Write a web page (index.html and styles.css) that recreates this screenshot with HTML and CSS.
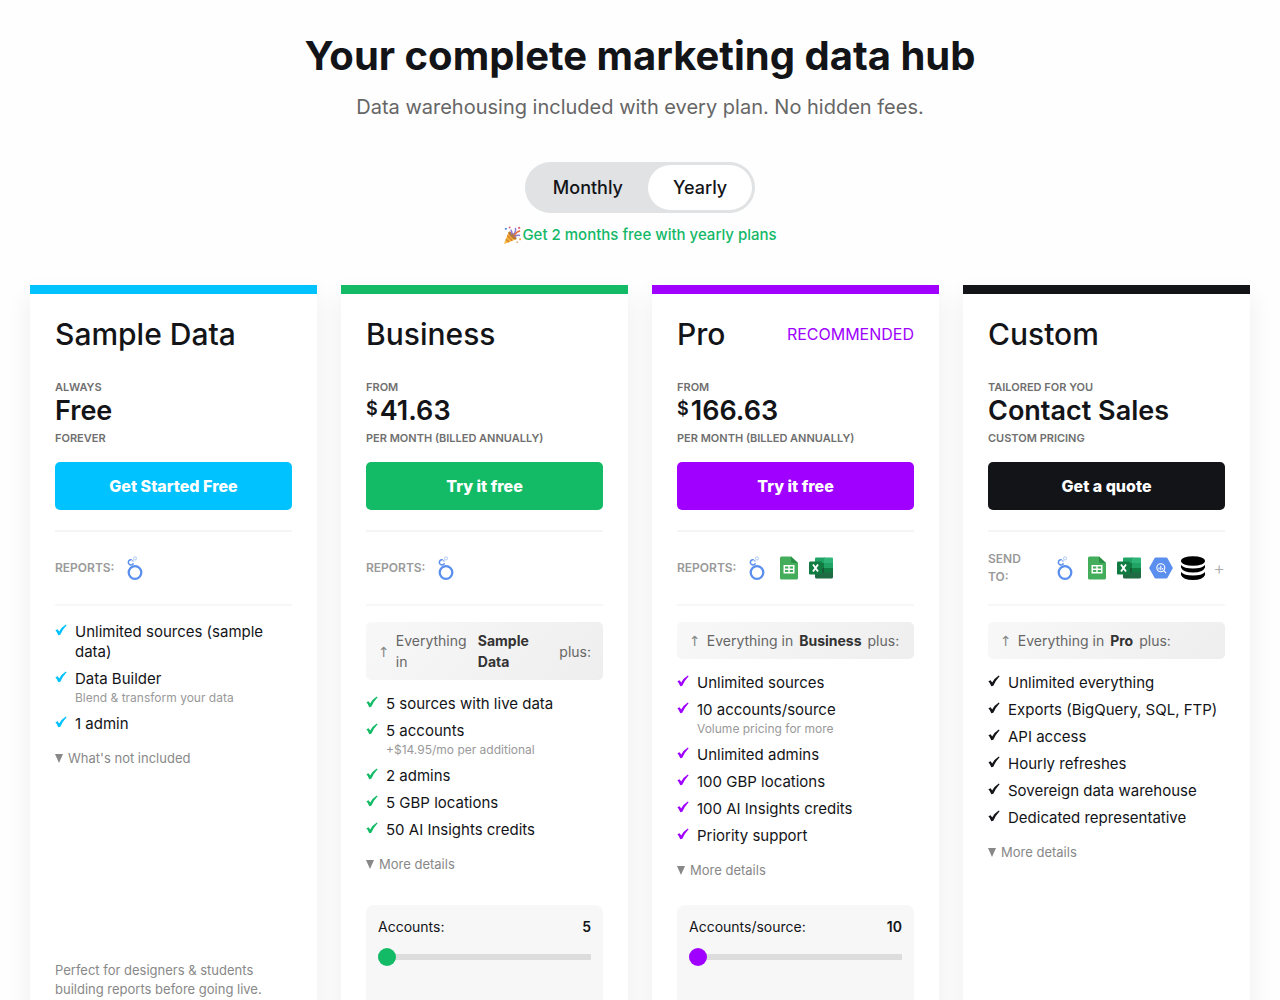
FILE: index.html
```html
<!DOCTYPE html>
<html lang="en">
<head>
  <meta charset="utf-8">
  <meta name="viewport" content="width=device-width, initial-scale=1">
  <title>Pricing</title>
  <link rel="stylesheet" href="styles.css">
</head>
<body>
  <!-- icon sprites -->
  <svg class="sprites" aria-hidden="true">
    <symbol id="check" viewBox="0 0 12 12">
      <path d="M.4 6.300 2.600 5.200 4.200 7.600Q6.500 3 10.800.4L11.600 1.200Q7.500 5.500 5.300 10.800L3.300 11.200Q2.200 8.200 .4 6.300z" fill="currentColor"/>
    </symbol>
    <symbol id="looker" viewBox="0 0 24 24">
      <circle cx="12" cy="16.500" r="6.300" fill="none" stroke="#5a8fee" stroke-width="2.300"/>
      <path d="M8.800 3.900A2.600 2.600 0 1 0 10.400 7.200" fill="none" stroke="#5a8fee" stroke-width="1.500"/>
      <path d="M9.300 4.200 10.400 5.600" stroke="#8fb3f3" stroke-width="1.300"/>
      <circle cx="12" cy="2.400" r="1.600" fill="none" stroke="#a9c4f5" stroke-width=".9"/>
    </symbol>
    <symbol id="sheets" viewBox="0 0 24 24">
      <path d="M4.500.5h9.500l7 6.500v15a1.500 1.500 0 0 1-1.500 1.500h-15A1.500 1.500 0 0 1 3 22V2A1.500 1.500 0 0 1 4.500.5z" fill="#43ad5b"/>
      <path d="M14 .5 21 7h-5.500A1.500 1.500 0 0 1 14 5.500z" fill="#2b8e47"/>
      <path d="M6.500 9h11v8.500h-11z" fill="#fff"/>
      <path d="M8 10.500h3.300v2H8zM12.700 10.500H16v2h-3.300zM8 14h3.300v2H8zM12.700 14H16v2h-3.300z" fill="#43ad5b"/>
    </symbol>
    <symbol id="excel" viewBox="0 0 24 24">
      <path d="M7 1.500h9v7H6v-6a1 1 0 0 1 1-1z" fill="#21a366"/>
      <path d="M15 1.500h8a1 1 0 0 1 1 1v5.500h-9z" fill="#2fb577"/>
      <path d="M6 7h9v5H6z" fill="#107c41"/>
      <path d="M15 7h9v5h-9z" fill="#21a366"/>
      <path d="M6 12h9v5H6z" fill="#185c37"/>
      <path d="M15 12h9v5h-9z" fill="#107c41"/>
      <path d="M6 16.500h18V21a1.500 1.500 0 0 1-1.500 1.500h-15A1.500 1.500 0 0 1 6 21z" fill="#1f6b43"/>
      <rect x="0" y="5.500" width="13" height="13" rx="1.200" fill="#107c41"/>
      <path d="M4 8.500 9 15.500M9 8.500 4 15.500" stroke="#fff" stroke-width="1.900"/>
    </symbol>
    <symbol id="bigquery" viewBox="0 0 24 24">
      <path d="M6.700 1.500h10.600a1.500 1.500 0 0 1 1.200.700l5 9a1.500 1.500 0 0 1 0 1.600l-5 9a1.500 1.500 0 0 1-1.200.700H6.700a1.500 1.500 0 0 1-1.200-.700l-5-9a1.500 1.500 0 0 1 0-1.600l5-9a1.500 1.500 0 0 1 1.200-.700z" fill="#5a8ff0"/>
      <circle cx="11.800" cy="11.800" r="4" fill="none" stroke="#fff" stroke-width="1.100"/>
      <path d="M10 11.500v2M11.800 9.800v4.400M13.600 12v1.500M14.700 14.700l2.300 2.300" stroke="#fff" stroke-width="1.100"/>
    </symbol>
    <symbol id="database" viewBox="0 0 24 24">
      <ellipse cx="12" cy="5" rx="12" ry="4.800"/>
      <path d="M0 9Q3 12.500 12 12.500T24 9v2.500q-2 5-12 5T0 11.500z"/>
      <path d="M0 16Q3 19.500 12 19.500T24 16v3q-2 5-12 5T0 19z"/>
    </symbol>
  </svg>

  <header class="hero">
    <h1>Your complete marketing data hub</h1>
    <p class="subtitle">Data warehousing included with every plan. No hidden fees.</p>
    <div class="toggle">
      <input type="radio" name="billing" id="monthly">
      <label for="monthly">Monthly</label>
      <input type="radio" name="billing" id="yearly" checked>
      <label for="yearly">Yearly</label>
    </div>
    <p class="promo">
      <svg class="party" viewBox="0 0 20 20" aria-hidden="true">
        <path d="M1 19 6 6l8 8z" fill="#f5b53c"/>
        <path d="M4.500 10 9.500 15.500M3 14l3.500 3" stroke="#d9822b" stroke-width="1.500"/>
        <ellipse cx="10" cy="10" rx="2.200" ry="5.500" transform="rotate(-45 10 10)" fill="#b9783c"/>
        <path d="M9 9q1-3-1-5M11 9q3-3 2-7M12 11q3-2 6-1" fill="none" stroke="#8a7bd0" stroke-width="1.500"/>
        <path d="M12 10q2-4 6-5" fill="none" stroke="#e8703f" stroke-width="1.500"/>
        <circle cx="3" cy="3" r="1.200" fill="#5b8fe0"/>
        <circle cx="17" cy="2" r="1.200" fill="#e0607a"/>
        <circle cx="7" cy="1.500" r="1" fill="#e0607a"/>
        <circle cx="18" cy="14" r="1" fill="#f0a030"/>
        <circle cx="15" cy="17" r="1" fill="#e0b080"/>
      </svg>Get 2 months free with yearly plans
    </p>
  </header>

  <main class="plans">
    <section class="card sample">
      <div class="card-title"><h2>Sample Data</h2></div>
      <p class="caption">Always</p>
      <p class="price">Free</p>
      <p class="caption">Forever</p>
      <button class="cta">Get Started Free</button>
      <div class="targets">
        <span class="targets-label">Reports:</span>
        <div class="icons">
          <svg><use href="#looker"/></svg>
        </div>
      </div>
      <ul class="features">
        <li><svg><use href="#check"/></svg>Unlimited sources (sample data)</li>
        <li><svg><use href="#check"/></svg>Data Builder <small>Blend &amp; transform your data</small></li>
        <li><svg><use href="#check"/></svg>1 admin</li>
      </ul>
      <details><summary>What's not included</summary></details>
      <p class="note">Perfect for designers &amp; students building reports before going live.</p>
    </section>

    <section class="card business">
      <div class="card-title"><h2>Business</h2></div>
      <p class="caption">From</p>
      <p class="price"><sup>$</sup>41.63</p>
      <p class="caption">Per month (billed annually)</p>
      <button class="cta">Try it free</button>
      <div class="targets">
        <span class="targets-label">Reports:</span>
        <div class="icons">
          <svg><use href="#looker"/></svg>
        </div>
      </div>
      <div class="inherits"><i>↑</i> Everything in <strong>Sample Data</strong> plus:</div>
      <ul class="features">
        <li><svg><use href="#check"/></svg>5 sources with live data</li>
        <li><svg><use href="#check"/></svg>5 accounts <small>+$14.95/mo per additional</small></li>
        <li><svg><use href="#check"/></svg>2 admins</li>
        <li><svg><use href="#check"/></svg>5 GBP locations</li>
        <li><svg><use href="#check"/></svg>50 AI Insights credits</li>
      </ul>
      <details><summary>More details</summary></details>
      <div class="slider-box">
        <div class="slider-head"><label for="accounts">Accounts:</label><output for="accounts">5</output></div>
        <input type="range" id="accounts" min="5" max="100" value="5">
      </div>
    </section>

    <section class="card pro">
      <div class="card-title"><h2>Pro</h2><span class="recommended">Recommended</span></div>
      <p class="caption">From</p>
      <p class="price"><sup>$</sup>166.63</p>
      <p class="caption">Per month (billed annually)</p>
      <button class="cta">Try it free</button>
      <div class="targets">
        <span class="targets-label">Reports:</span>
        <div class="icons">
          <svg><use href="#looker"/></svg>
          <svg><use href="#sheets"/></svg>
          <svg><use href="#excel"/></svg>
        </div>
      </div>
      <div class="inherits"><i>↑</i> Everything in <strong>Business</strong> plus:</div>
      <ul class="features">
        <li><svg><use href="#check"/></svg>Unlimited sources</li>
        <li><svg><use href="#check"/></svg>10 accounts/source <small>Volume pricing for more</small></li>
        <li><svg><use href="#check"/></svg>Unlimited admins</li>
        <li><svg><use href="#check"/></svg>100 GBP locations</li>
        <li><svg><use href="#check"/></svg>100 AI Insights credits</li>
        <li><svg><use href="#check"/></svg>Priority support</li>
      </ul>
      <details><summary>More details</summary></details>
      <div class="slider-box">
        <div class="slider-head"><label for="per-source">Accounts/source:</label><output for="per-source">10</output></div>
        <input type="range" id="per-source" min="10" max="100" value="10">
      </div>
    </section>

    <section class="card custom">
      <div class="card-title"><h2>Custom</h2></div>
      <p class="caption">Tailored for you</p>
      <p class="price">Contact Sales</p>
      <p class="caption">Custom pricing</p>
      <button class="cta">Get a quote</button>
      <div class="targets">
        <span class="targets-label">Send to:</span>
        <div class="icons">
          <svg><use href="#looker"/></svg>
          <svg><use href="#sheets"/></svg>
          <svg><use href="#excel"/></svg>
          <svg><use href="#bigquery"/></svg>
          <svg><use href="#database"/></svg>
          <span class="plus">+</span>
        </div>
      </div>
      <div class="inherits"><i>↑</i> Everything in <strong>Pro</strong> plus:</div>
      <ul class="features">
        <li><svg><use href="#check"/></svg>Unlimited everything</li>
        <li><svg><use href="#check"/></svg>Exports (BigQuery, SQL, FTP)</li>
        <li><svg><use href="#check"/></svg>API access</li>
        <li><svg><use href="#check"/></svg>Hourly refreshes</li>
        <li><svg><use href="#check"/></svg>Sovereign data warehouse</li>
        <li><svg><use href="#check"/></svg>Dedicated representative</li>
      </ul>
      <details><summary>More details</summary></details>
    </section>
  </main>
</body>
</html>
```
FILE: styles.css
```css
* {
  box-sizing: border-box;
}

body {
  margin: 0;
  background-color: #fefefe;
  color: #131418;
  font-family: Inter, "Open Sans", sans-serif;
  font-size: 14px;
}

h1, h2, p, ul {
  margin: 0;
  padding: 0;
}

.sprites {
  display: none;
}

/* hero */
.hero {
  display: flex;
  flex-direction: column;
  align-items: center;
  padding-top: 32px;
  text-align: center;
}

h1 {
  font-size: 40px;
  line-height: 48px;
  font-weight: 700;
}

.subtitle {
  margin-top: 12px;
  font-size: 20px;
  line-height: 30px;
  color: #666;
}

.toggle {
  display: flex;
  margin-top: 40px;
  padding: 3px;
  border-radius: 26px;
  background-color: #e0e2e3;
}

.toggle input {
  position: absolute;
  opacity: 0;
}

.toggle label {
  padding: 0 25px;
  border-radius: 23px;
  font-size: 18px;
  line-height: 45px;
  font-weight: 500;
  cursor: pointer;
}

.toggle input:checked + label {
  background-color: #fff;
}

.promo {
  display: flex;
  align-items: center;
  margin-top: 12px;
  font-size: 15px;
  line-height: 20px;
  font-weight: 500;
  color: #13b867;
}

.party {
  width: 19px;
  height: 19px;
}

/* plan cards */
.plans {
  display: grid;
  grid-template-columns: repeat(4, minmax(0, 1fr));
  gap: 24px;
  padding: 40px 30px;
}

.card {
  display: flex;
  flex-direction: column;
  padding: 20px 25px 25px;
  border-top: 9px solid var(--accent);
  background-color: #fff;
  box-shadow: 0 10px 24px rgba(20, 20, 50, 0.07);
}

.sample {
  --accent: #00c2ff;
}

.business {
  --accent: #13bb67;
}

.pro {
  --accent: #a000ff;
}

.custom {
  --accent: #131418;
}

.card-title {
  display: flex;
  align-items: center;
  justify-content: space-between;
  margin-bottom: 24px;
}

h2 {
  font-size: 30px;
  line-height: 40px;
  font-weight: 500;
}

.recommended {
  font-size: 16px;
  text-transform: uppercase;
  color: var(--accent);
}

.caption {
  font-size: 11px;
  line-height: 18px;
  font-weight: 600;
  text-transform: uppercase;
  color: #6f6f6f;
}

.price {
  padding-bottom: 3px;
  font-size: 27px;
  line-height: 30px;
  font-weight: 600;
}

.price sup {
  margin-right: 2px;
  font-size: 18px;
  line-height: 0;
  vertical-align: 5px;
}

.cta {
  height: 48px;
  margin: 15px 0 20px;
  border: none;
  border-radius: 5px;
  background-color: var(--accent);
  color: #fff;
  font: 800 16px Inter, "Open Sans", sans-serif;
  cursor: pointer;
}

.targets {
  display: flex;
  align-items: center;
  gap: 9px;
  height: 76px;
  margin-bottom: 16px;
  border-top: 2px solid #f5f5f5;
  border-bottom: 2px solid #f7f7f7;
}

.targets-label {
  font-size: 12px;
  line-height: 18px;
  font-weight: 600;
  text-transform: uppercase;
  color: #999;
}

.icons {
  display: flex;
  align-items: center;
  gap: 8px;
}

.icons svg {
  width: 24px;
  height: 24px;
  flex: none;
}

.plus {
  font-size: 18px;
  font-weight: 300;
  color: #aaa;
}

.inherits {
  display: flex;
  align-items: center;
  gap: 6px;
  margin-bottom: 14px;
  padding: 8px 12px;
  border-radius: 5px;
  background: linear-gradient(135deg, #f8f8f8, #eee);
  line-height: 21px;
  color: #666;
}

.inherits i {
  font-style: normal;
  font-family: "Noto Sans", "DejaVu Sans", sans-serif;
  color: #888;
}

.inherits strong {
  color: #333;
}

.features {
  list-style: none;
}

.features li {
  position: relative;
  margin-bottom: 7px;
  padding-left: 20px;
  font-size: 15px;
  line-height: 20px;
}

.features svg {
  position: absolute;
  left: 0;
  top: 2px;
  width: 12px;
  height: 12px;
  color: var(--accent);
}

.features small {
  display: block;
  font-size: 12px;
  line-height: 18px;
  color: #999;
}

summary {
  margin-top: 8px;
  font-size: 13px;
  line-height: 18px;
  list-style: none;
  color: #888;
  cursor: pointer;
}

summary::before {
  content: "";
  display: inline-block;
  margin-right: 5px;
  border: 4px solid transparent;
  border-top: 9px solid #888;
  border-bottom: none;
}

/* card footers */
.note {
  min-height: 54px;
  margin-top: auto;
  font-size: 13px;
  line-height: 19px;
  color: #888;
}

.slider-box {
  min-height: 110px;
  margin-top: auto;
  padding: 12px;
  border-radius: 8px;
  background-color: #f7f7f7;
}

.pro .slider-box {
  margin-top: 26px;
}

.slider-head {
  display: flex;
  justify-content: space-between;
  margin-bottom: 11px;
  line-height: 20px;
}

.slider-head output {
  font-weight: 600;
}

.slider-box input {
  display: block;
  appearance: none;
  width: 100%;
  height: 18px;
  margin: 0;
  background: linear-gradient(#ddd, #ddd) center / 100% 6px no-repeat;
}

.slider-box input::-webkit-slider-thumb {
  appearance: none;
  width: 18px;
  height: 18px;
  border-radius: 50%;
  background-color: var(--accent);
}
```
